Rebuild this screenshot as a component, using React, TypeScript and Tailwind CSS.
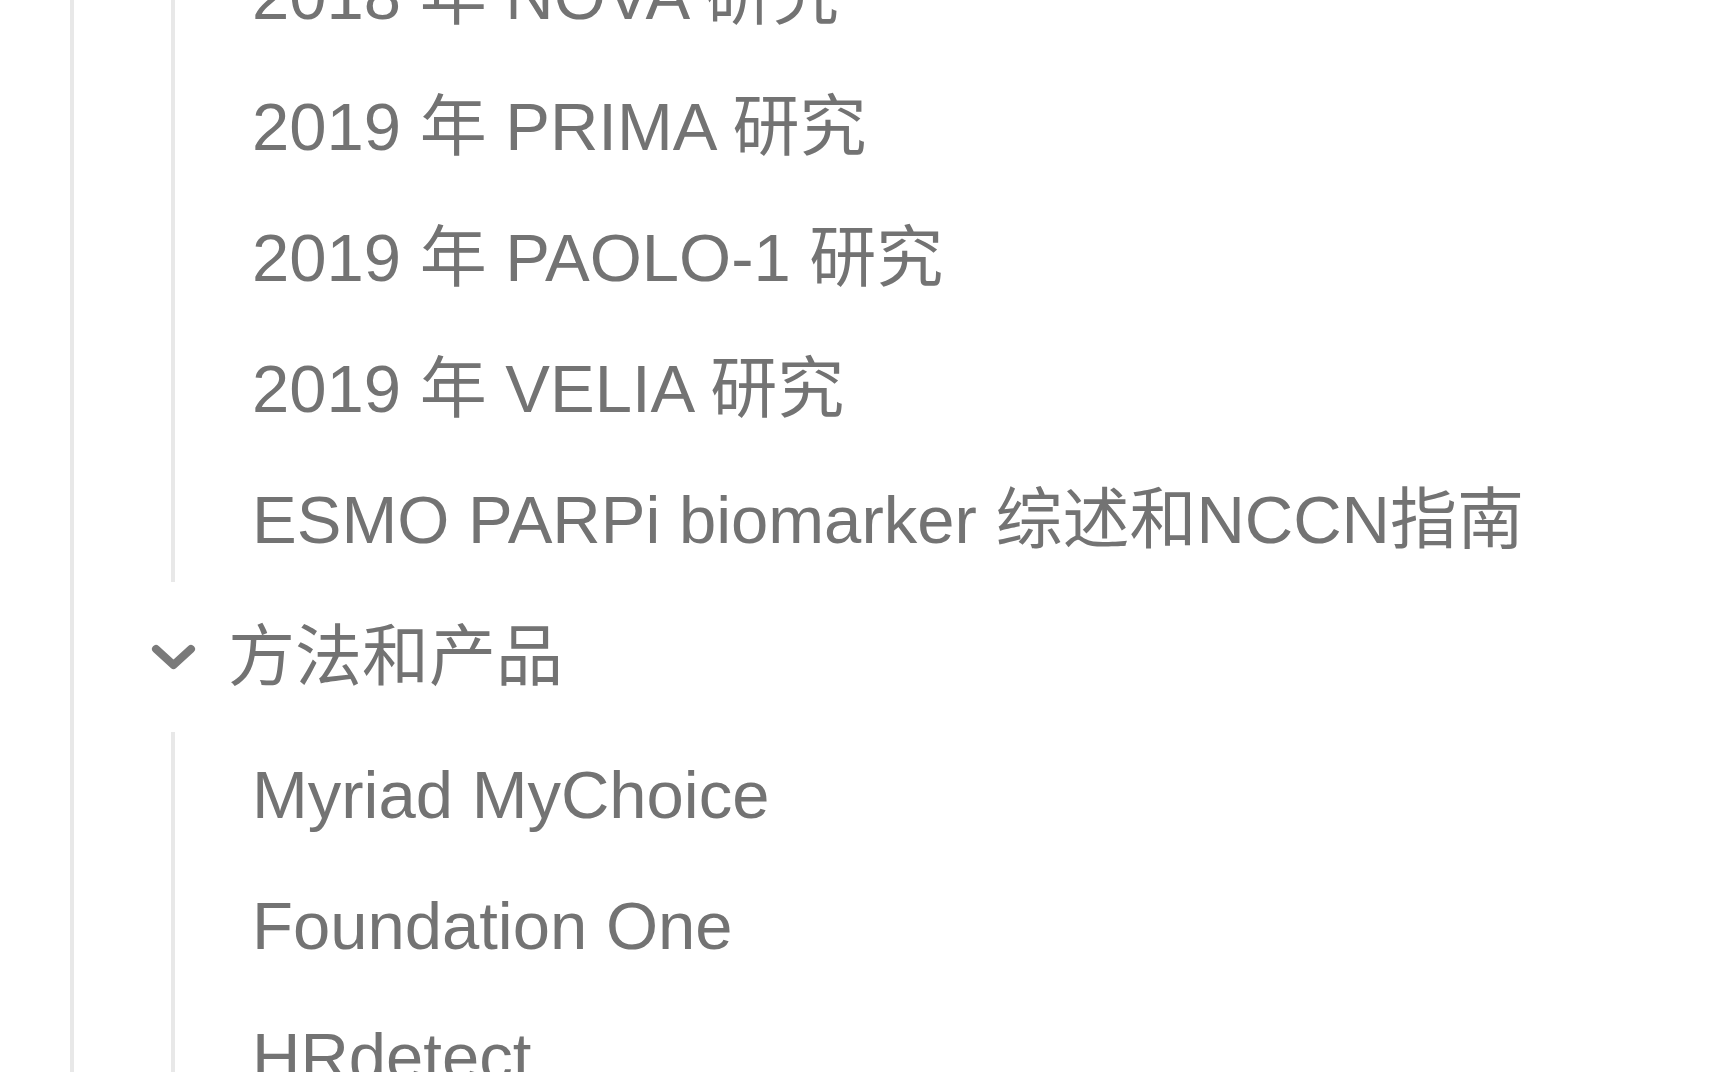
import React from "react";

const LINE = "bg-[#e8e8e8]";

function Row({ label }: { label: string }) {
  return (
    <div className="flex h-[131px] items-center pl-[77px] whitespace-nowrap">
      {label}
    </div>
  );
}

function Group({ items }: { items: string[] }) {
  return (
    <div className="ml-[97px] flex">
      <div className={`w-[4px] shrink-0 my-[3px] ${LINE}`} />
      <div className="flex flex-col">
        {items.map((t) => (
          <Row key={t} label={t} />
        ))}
      </div>
    </div>
  );
}

function Chevron() {
  return (
    <svg width="46" height="26" viewBox="0 0 46 26" className="shrink-0">
      <path
        d="M5 5 L22.5 21 L40 5"
        fill="none"
        stroke="#7a7a7a"
        strokeWidth="8"
        strokeLinecap="round"
        strokeLinejoin="round"
      />
    </svg>
  );
}

export default function App() {
  return (
    <div
      className="w-full h-screen overflow-hidden bg-white text-[67px] leading-none text-[#737373]"
      style={{ fontFamily: '"Liberation Sans", "Noto Sans CJK SC", sans-serif' }}
    >
      <div className="ml-[70px] -mt-[70.5px] border-l-4 border-[#e8e8e8]">
        <Group
          items={[
            "2018 年 NOVA 研究",
            "2019 年 PRIMA 研究",
            "2019 年 PAOLO-1 研究",
            "2019 年 VELIA 研究",
            "ESMO PARPi biomarker 综述和NCCN指南",
          ]}
        />
        <div className="flex h-[144px] items-center pl-[77px] gap-[31px] whitespace-nowrap">
          <Chevron />
          <span>方法和产品</span>
        </div>
        <Group items={["Myriad MyChoice", "Foundation One", "HRdetect", "Other"]} />
      </div>
    </div>
  );
}
